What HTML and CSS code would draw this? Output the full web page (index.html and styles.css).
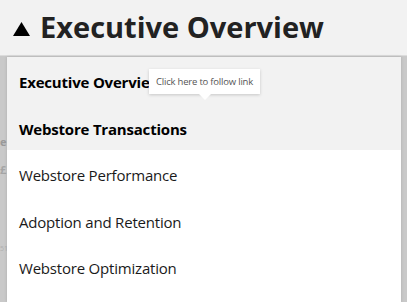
FILE: index.html
```html
<!DOCTYPE html>
<html>
<head>
<meta charset="utf-8">
<link rel="stylesheet" href="styles.css">
</head>
<body>
<header class="header">
  <svg class="caret" width="17" height="14" viewBox="0 0 17 14"><polygon points="8.5,0 17,14 0,14" fill="#000"/></svg>
  <h1 class="title">Executive Overview</h1>
</header>
<main class="backdrop">
  <div class="ghost">
    <span class="g1">e</span>
    <span class="g2">£</span>
    <span class="g3">51</span>
  </div>
</main>
<nav class="menu">
  <a class="item bold shaded">Executive Overview</a>
  <a class="item bold shaded">Webstore Transactions</a>
  <a class="item">Webstore Performance</a>
  <a class="item">Adoption and Retention</a>
  <a class="item">Webstore Optimization</a>
</nav>
<div class="tooltip">Click here to follow link</div>
</body>
</html>
```
FILE: styles.css
```css
html, body {
  margin: 0;
  padding: 0;
  width: 407px;
  height: 302px;
  overflow: hidden;
  background: #f2f2f2;
  font-family: "Open Sans", "Noto Sans", sans-serif;
}
.header {
  height: 56px;
  display: flex;
  align-items: center;
  padding-left: 13px;
  border-bottom: 1px solid #dcdcdc;
  box-sizing: border-box;
}
.caret {
  margin-top: 3px;
  margin-right: 10px;
}
.title {
  margin: 0;
  margin-top: -2px;
  font-size: 29px;
  font-weight: 700;
  color: #222;
}
.backdrop {
  height: 246px;
  background: #c9c9c9;
  position: relative;
}
.ghost {
  color: #9a9a9a;
}
.g1 { position: absolute; left: 0; top: 78px; font-size: 11px; font-weight: 700; }
.g2 { position: absolute; left: 0; top: 106px; font-size: 11px; font-weight: 700; color: #a5a5a5; }
.g3 { position: absolute; left: 0; top: 188px; font-size: 7px; color: #b0b0b0; }
.menu {
  position: absolute;
  left: 7px;
  top: 57px;
  width: 394px;
  height: 245px;
  background: #fff;
  display: flex;
  flex-direction: column;
  box-shadow: 0 0 3px rgba(0,0,0,0.15);
}
.item {
  height: 46.5px;
  display: flex;
  align-items: center;
  padding-left: 12px;
  padding-top: 4px;
  box-sizing: border-box;
  font-size: 15px;
  color: #1a1a1a;
  letter-spacing: -0.2px;
}
.item.shaded { background: #f2f2f2; }
.item.bold { font-weight: 700; color: #000; }
.tooltip {
  position: absolute;
  left: 149px;
  top: 69px;
  width: 111px;
  height: 25px;
  background: #fff;
  box-shadow: 0 1px 3px rgba(0,0,0,0.18);
  font-size: 9.5px;
  color: #555;
  display: flex;
  align-items: center;
  justify-content: center;
  letter-spacing: -0.2px;
}
.tooltip::after {
  content: "";
  position: absolute;
  left: 50px;
  bottom: -6px;
  border-left: 6px solid transparent;
  border-right: 6px solid transparent;
  border-top: 6px solid #fff;
}
```
